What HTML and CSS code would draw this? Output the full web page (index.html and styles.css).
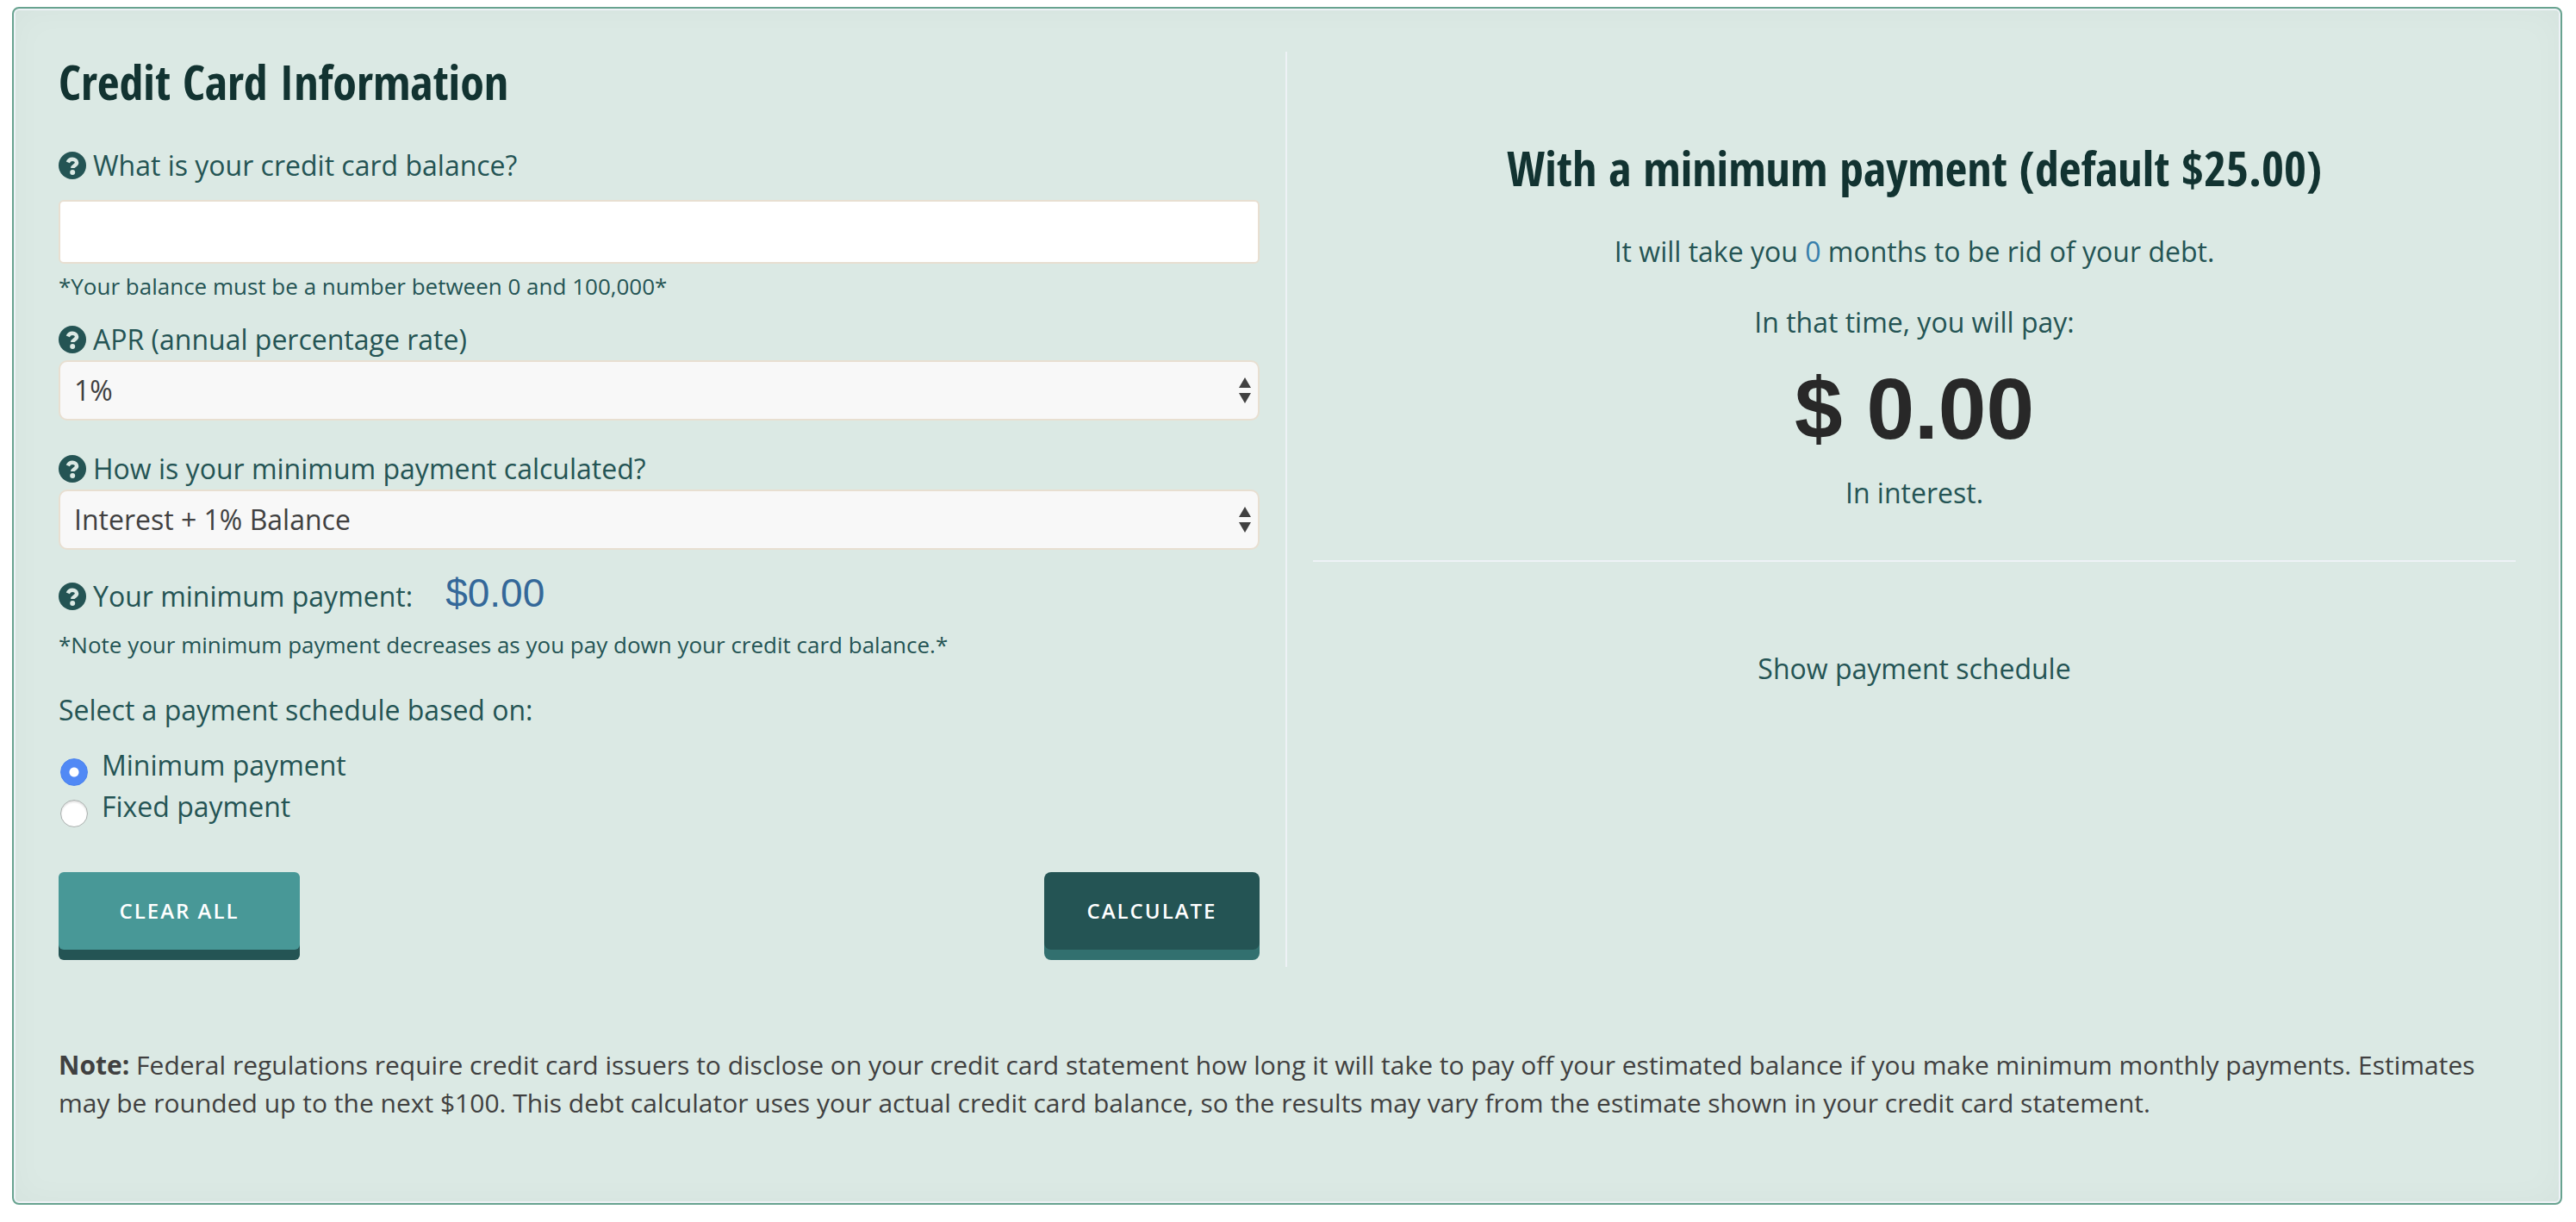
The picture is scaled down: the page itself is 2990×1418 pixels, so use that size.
FILE: index.html
```html
<!DOCTYPE html>
<html lang="en">
<head>
<meta charset="utf-8">
<meta name="viewport" content="width=device-width, initial-scale=1">
<title>Credit Card Calculator</title>
<link rel="stylesheet" href="styles.css">
</head>
<body>
<svg class="sprite" aria-hidden="true">
  <symbol id="help" viewBox="0 0 32 32">
    <circle cx="16" cy="16" r="16" fill="currentColor"/>
    <path d="M10.800 12.400c1-2.400 2.700-3.600 5.300-3.600 2.800 0 5 1.600 5 4 0 3.300-4.800 3.300-4.800 6.300" fill="none" stroke="#dbe9e4" stroke-width="4.400"/>
    <circle cx="16.200" cy="24" r="3" fill="#dbe9e4"/>
  </symbol>
  <symbol id="arrows" viewBox="0 0 14 30">
    <path d="M7 0l7 12H0zM7 30l7-12H0z" fill="#404040"/>
  </symbol>
</svg>
<main class="panel">
  <div class="columns">
    <form class="form">
      <h2 class="title">Credit Card Information</h2>
      <label class="label label-first" for="balance"><svg class="help"><use href="#help"/></svg>What is your credit card balance?</label>
      <input class="input" id="balance" type="text">
      <p class="hint">*Your balance must be a number between 0 and 100,000*</p>
      <label class="label label-apr" for="apr"><svg class="help"><use href="#help"/></svg>APR (annual percentage rate)</label>
      <div class="select-wrap">
        <select class="select" id="apr"><option>1%</option><option>2%</option><option>3%</option></select>
        <svg class="arrows"><use href="#arrows"/></svg>
      </div>
      <label class="label label-method" for="method"><svg class="help"><use href="#help"/></svg>How is your minimum payment calculated?</label>
      <div class="select-wrap">
        <select class="select" id="method"><option>Interest + 1% Balance</option></select>
        <svg class="arrows"><use href="#arrows"/></svg>
      </div>
      <div class="minimum">
        <span class="label"><svg class="help"><use href="#help"/></svg>Your minimum payment:</span>
        <output class="amount">$0.00</output>
      </div>
      <p class="hint hint-note">*Note your minimum payment decreases as you pay down your credit card balance.*</p>
      <fieldset class="schedule">
        <legend class="legend">Select a payment schedule based on:</legend>
        <label class="option"><input class="radio" type="radio" name="schedule" checked>Minimum payment</label>
        <label class="option"><input class="radio" type="radio" name="schedule">Fixed payment</label>
      </fieldset>
      <div class="actions">
        <button class="btn btn-clear" type="reset">CLEAR ALL</button>
        <button class="btn btn-calc" type="button">CALCULATE</button>
      </div>
    </form>
    <section class="results">
      <h2 class="title">With a minimum payment (default $25.00)</h2>
      <p class="months">It will take you <span class="count">0</span> months to be rid of your debt.</p>
      <p class="pay">In that time, you will pay:</p>
      <p class="total">$ 0.00</p>
      <p class="interest">In interest.</p>
      <hr class="rule">
      <button class="show" type="button">Show payment schedule</button>
    </section>
  </div>
  <p class="note"><strong>Note:</strong> Federal regulations require credit card issuers to disclose on your credit card statement how long it will take to pay off your estimated balance if you make minimum monthly payments. Estimates may be rounded up to the next $100. This debt calculator uses your actual credit card balance, so the results may vary from the estimate shown in your credit card statement.</p>
</main>
</body>
</html>
```
FILE: styles.css
```css
* { box-sizing: border-box; }
body {
  margin: 0;
  background: #fff;
  color: #245454;
  font: 32px/44px "Open Sans", sans-serif;
}
h2, p { margin: 0; }
button, input, select { font: inherit; }
.sprite { position: absolute; width: 0; height: 0; }

.panel {
  margin: 8px 16px 20px 14px;
  padding: 50px 52px 94px;
  border: 2px solid #68a390;
  border-radius: 8px;
  background: #dbe9e4;
  box-shadow: inset 0 0 0 2px #eef2f6, inset 0 0 40px rgba(0, 0, 0, 0.03);
}
.columns { display: grid; grid-template-columns: 1fr 1fr; }
.form {
  display: flex;
  flex-direction: column;
  padding: 0 30px 8px 0;
  border-right: 2px solid #eef2f6;
}
.title {
  color: #123331;
  font: bold 56px/68px "Open Sans Condensed", "Noto Sans Condensed", "Liberation Sans Narrow", "Open Sans", sans-serif;
}
.label { display: flex; align-items: center; gap: 8px; }
.help { width: 32px; height: 32px; flex: none; }
.label-first { margin: 42px 0 18px; }
.label-apr { margin: 22px 0 2px; }
.label-method { margin: 34px 0 2px; }
.input {
  width: 100%;
  height: 74px;
  padding: 0 16px;
  border: 2px solid #e8dfd1;
  border-radius: 6px;
  background: #fff;
  color: #404040;
}
.hint { margin-top: 8px; font-size: 26px; line-height: 36px; }
.select-wrap { position: relative; }
.select {
  display: block;
  width: 100%;
  height: 70px;
  padding: 0 48px 0 16px;
  appearance: none;
  border: 2px solid #e8dfd1;
  border-radius: 10px;
  background: #f8f8f8;
  color: #404040;
}
.arrows {
  position: absolute;
  top: 20px;
  right: 10px;
  width: 14px;
  height: 30px;
  pointer-events: none;
}
.minimum { display: flex; align-items: flex-start; gap: 38px; margin-top: 32px; }
.amount { color: #346899; font: 46px/36px "Liberation Sans", Arial, sans-serif; }
.hint-note { margin-top: 16px; }
.schedule { margin: 36px 0 0; padding: 0; border: 0; }
.legend { margin-bottom: 18px; padding: 0; }
.option { display: flex; gap: 16px; line-height: 48px; }
.radio {
  flex: none;
  width: 32px;
  height: 32px;
  margin: 16px 0 0 2px;
  appearance: none;
  border: 1px solid #a9afad;
  border-radius: 50%;
  background: #fff;
  box-shadow: inset 0 2px 2px rgba(0, 0, 0, 0.12);
}
.radio:checked {
  border-color: #4a83ee;
  background: radial-gradient(circle, #fff 5px, #5189f5 6px);
  box-shadow: none;
}
.actions { display: flex; justify-content: space-between; margin-top: 52px; padding-bottom: 12px; }
.btn {
  height: 90px;
  padding: 0;
  border: 0;
  color: #fff;
  font-size: 24px;
  font-weight: 600;
  letter-spacing: 2px;
}
.btn-clear { width: 280px; border-radius: 6px; background: #489897; box-shadow: 0 12px 0 #245454; }
.btn-calc { width: 250px; border-radius: 8px; background: #245454; box-shadow: 0 12px 0 #32706f; }

.results {
  display: flex;
  flex-direction: column;
  padding: 100px 0 0 30px;
  text-align: center;
}
.months { margin-top: 42px; }
.count { color: #377fac; font-weight: 500; }
.pay { margin-top: 38px; }
.total { margin-top: 18px; color: #282828; font: bold 100px/120px "Liberation Sans", Arial, sans-serif; }
.interest { margin-top: 16px; }
.rule { width: 100%; margin: 56px 0 0; border: 0; border-top: 2px solid #eef2f6; }
.show { align-self: center; margin-top: 102px; padding: 0; border: 0; background: none; color: inherit; }
.note { margin-top: 92px; color: #404040; font-size: 30px; }
```
